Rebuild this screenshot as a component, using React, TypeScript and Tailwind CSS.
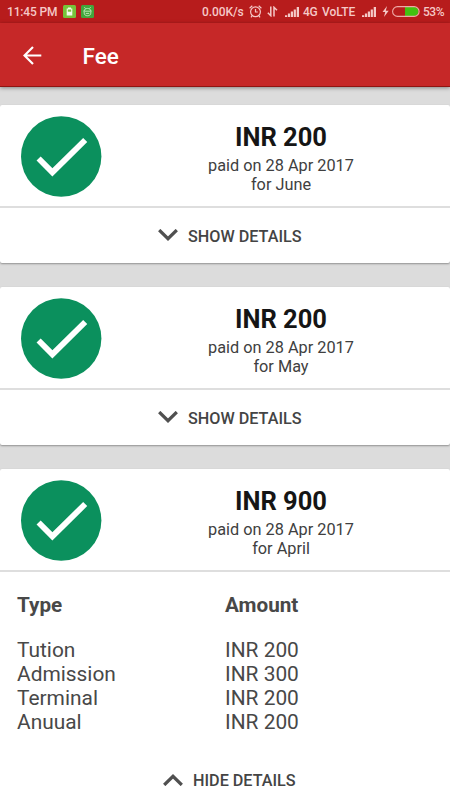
import React from "react";

type Line = { type: string; amount: string };
type Fee = { amount: string; month: string; lines?: Line[] };

const fees: Fee[] = [
  { amount: "INR 200", month: "June" },
  { amount: "INR 200", month: "May" },
  {
    amount: "INR 900",
    month: "April",
    lines: [
      { type: "Tution", amount: "INR 200" },
      { type: "Admission", amount: "INR 300" },
      { type: "Terminal", amount: "INR 200" },
      { type: "Anuual", amount: "INR 200" },
    ],
  },
];

function Signal({ className }: { className: string }) {
  return (
    <svg className={className} width="14" height="10" viewBox="0 0 14 10" fill="#f5c9c7">
      <path d="M0 8.2h2.2V10H0zM2.9 6.6h2.2V10H2.9zM5.8 4.6H8V10H5.8zM8.7 2.4h2.2V10H8.7zM11.7 0H14v10h-2.3z" />
    </svg>
  );
}

function StatusBar() {
  return (
    <div className="flex h-[23px] items-center bg-[#b71c1c] pl-[7px] pr-[7px] text-[12px] font-medium leading-[23px] text-[#f5c9c7]">
      <span className="w-[50px] whitespace-nowrap pt-px tracking-[-0.15px]">11:45 PM</span>
      <svg className="ml-[6px]" width="13" height="13" viewBox="0 0 13 13">
        <rect width="13" height="13" rx="1.5" fill="#76c43a" />
        <path d="M5 2.5h3v1h1.3v7H3.7v-7H5z" fill="#f3fbe9" />
        <rect x="4.8" y="4.5" width="3.4" height="2.2" fill="#76c43a" />
      </svg>
      <svg className="ml-[5px]" width="13" height="13" viewBox="0 0 13 13" fill="none" stroke="#c6edc2" strokeWidth="0.9">
        <rect width="13" height="13" rx="1.5" fill="#43a63c" stroke="none" />
        <path d="M3.4 2.2 4.5 3.6M9.6 2.2 8.5 3.6M3.2 6C3.2 2.6 9.8 2.6 9.8 6M2.3 6.2h8.4M3.2 6.8v1.4c0 3.4 6.6 3.4 6.6 0V6.8M4.8 8.4h3.4" />
      </svg>
      <span className="ml-auto w-[41px] whitespace-nowrap pt-px tracking-[-0.1px]">0.00K/s</span>
      <svg className="ml-[6px]" width="13" height="13" viewBox="0 0 13 13" fill="none" stroke="#f5c9c7" strokeWidth="1.2">
        <circle cx="6.5" cy="6.8" r="4.9" />
        <path d="M6.5 4v3h2.3M.6 3.2 3.3.8M12.4 3.2 9.7.8M3.2 10.5 2 12.3M9.8 10.5 11 12.3" />
      </svg>
      <svg className="ml-[5px]" width="11" height="11" viewBox="0 0 11 11" fill="none" stroke="#f5c9c7" strokeWidth="1.5">
        <path d="M3.8 .5v9.2L.8 6.8M7 10.5V1.3l3 2.9" />
      </svg>
      <Signal className="ml-[7px] mt-px" />
      <span className="ml-[4px] w-[15px] whitespace-nowrap pt-px tracking-[-0.2px]">4G</span>
      <span className="ml-[4px] w-[33px] whitespace-nowrap pt-px">VoLTE</span>
      <Signal className="ml-[7px] mt-px" />
      <svg className="ml-[6px]" width="7" height="11" viewBox="0 0 7 11" fill="#f5c9c7">
        <path d="M5 0 .5 6h2.7L2 11l4.7-6.3H3.8z" />
      </svg>
      <svg className="ml-[3px]" width="28" height="11" viewBox="0 0 28 11">
        <path d="M13 1h9a4.5 4.5 0 0 1 0 9h-9z" fill="#43c010" />
        <rect x=".6" y=".6" width="26.5" height="9.8" rx="4.9" fill="none" stroke="#efaaa7" strokeWidth="1.1" />
      </svg>
      <span className="ml-[3px] w-[20px] whitespace-nowrap pt-px tracking-[-0.5px]">53%</span>
    </div>
  );
}

function FeeCard({ fee }: { fee: Fee }) {
  const open = Boolean(fee.lines);
  return (
    <section className="rounded-[2px] bg-white shadow-[0_1px_2px_rgba(0,0,0,0.35)]">
      <div className="flex h-[101px] pl-[21px] pt-[11px]">
        <svg width="81" height="81" viewBox="0 0 81 81" className="shrink-0">
          <circle cx="40.2" cy="40.5" r="40.2" fill="#0b905d" />
          <path d="M17.6 42.5 31.4 56.4 64.2 24" fill="none" stroke="#fff" strokeWidth="5.8" />
        </svg>
        <div className="ml-[11px] flex w-[336px] flex-col items-center text-[#404040]">
          <div className="mt-[6px] h-[31px] text-[25.5px] font-bold leading-[31px] text-[#151515]">{fee.amount}</div>
          <div className="mt-[3px] text-[16.3px] leading-[19px]">paid on 28 Apr 2017</div>
          <div className="text-[16.3px] leading-[19px]">for {fee.month}</div>
        </div>
      </div>
      <div className="h-[2px] bg-[#dedede]" />
      {fee.lines && (
        <div className="h-[180px] pl-[17px] pt-[21px] text-[20.9px] leading-[24.2px] text-[#484848]">
          <div className="mb-[20.4px] grid grid-cols-[208px_1fr] text-[20.7px] font-bold">
            <span>Type</span>
            <span>Amount</span>
          </div>
          {fee.lines.map((line) => (
            <div key={line.type} className="grid grid-cols-[208px_1fr]">
              <span>{line.type}</span>
              <span>{line.amount}</span>
            </div>
          ))}
        </div>
      )}
      <button
        className={
          open
            ? "flex h-[56px] w-full items-center pl-[163px] text-[#444]"
            : "flex h-[55px] w-full items-center pl-[158px] text-[#444]"
        }
      >
        <svg width="20" height="12" viewBox="0 0 20 12" fill="none" stroke="#505050" strokeWidth="3.2" className="mb-px">
          {open ? <path d="m1.2 11 8.8-8.7 8.8 8.7" /> : <path d="m1.2 1 8.8 8.7L18.8 1" />}
        </svg>
        <span className="ml-[10px] whitespace-nowrap pt-[2px] text-[16.2px] font-medium leading-[20px]">
          {open ? "HIDE DETAILS" : "SHOW DETAILS"}
        </span>
      </button>
    </section>
  );
}

export default function App() {
  return (
    <div className="h-[800px] w-[450px] overflow-hidden bg-[#dcdcdc] font-[Roboto,sans-serif]">
      <StatusBar />
      <header className="flex h-[64px] items-center border-b border-[#8f1512] bg-[#c62828] pl-[23px] text-white shadow-[0_1px_4px_rgba(0,0,0,0.4)]">
        <svg width="19" height="19" viewBox="0 0 19 19" fill="none" stroke="#fff" strokeWidth="2.2" className="mt-px">
          <path d="M18.3 9.5H1.5M10 1 1.5 9.5 10 18" />
        </svg>
        <h1 className="ml-[40.5px] pt-[3px] text-[22.5px] font-medium leading-[28px]">Fee</h1>
      </header>
      <main className="flex flex-col gap-[24px] pt-[18px]">
        {fees.map((fee) => (
          <FeeCard key={fee.month} fee={fee} />
        ))}
      </main>
    </div>
  );
}
